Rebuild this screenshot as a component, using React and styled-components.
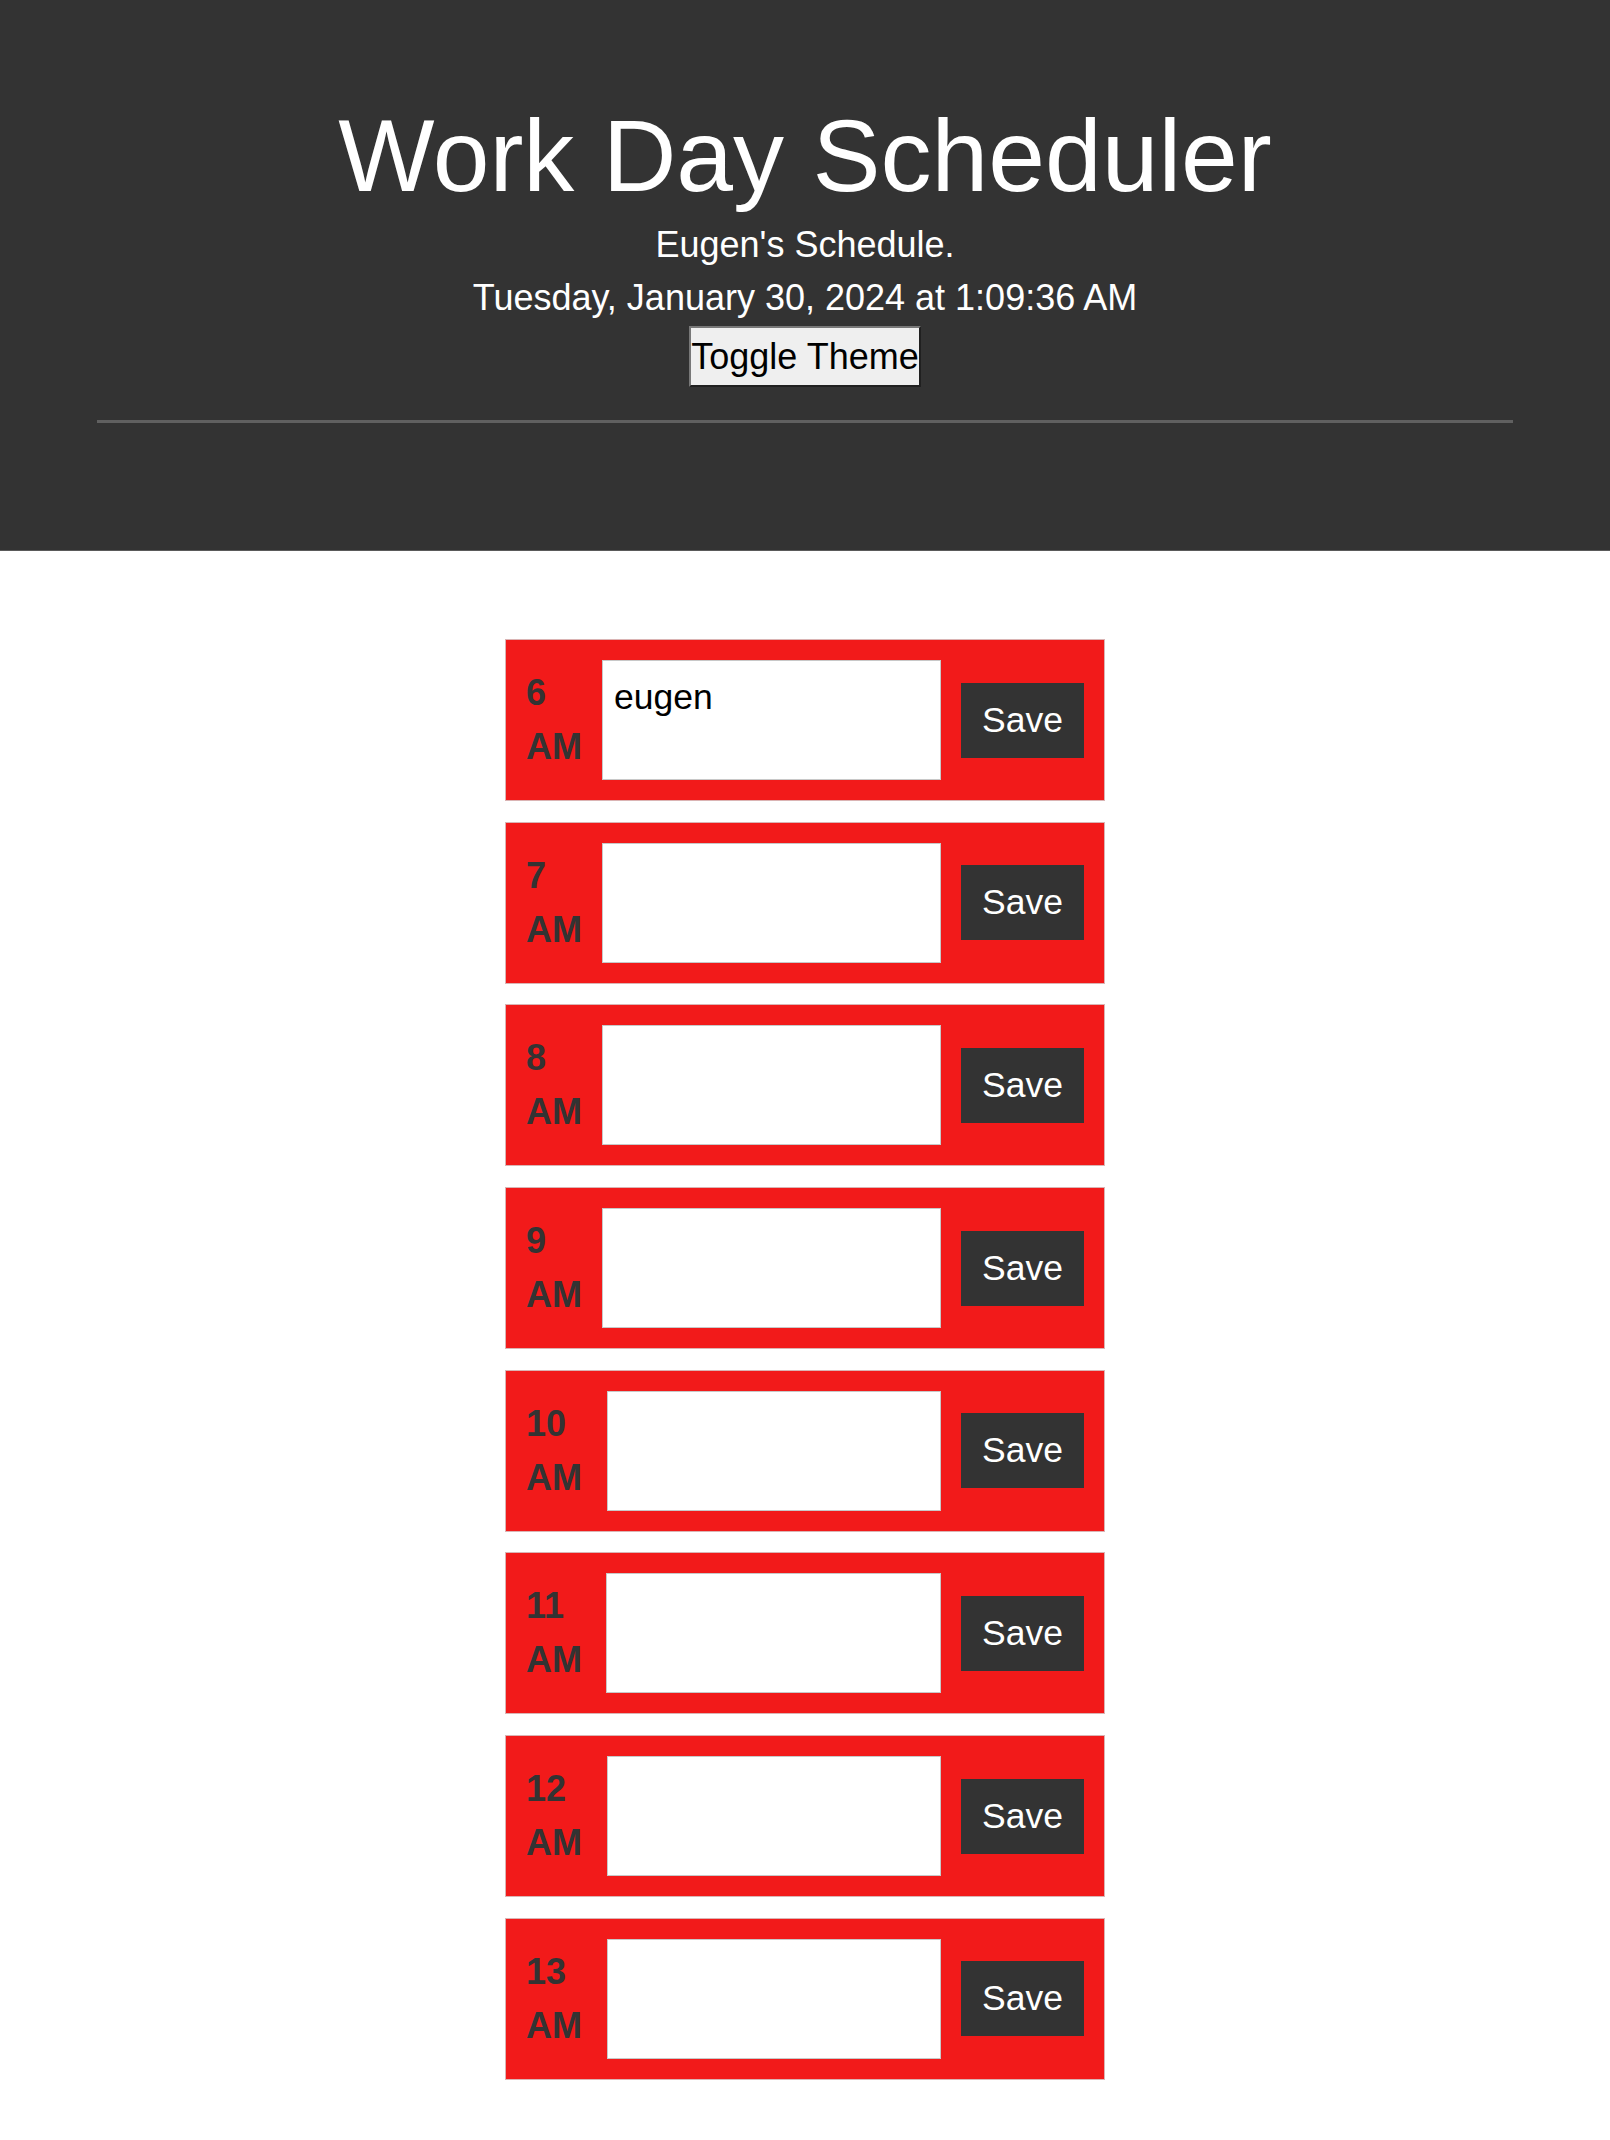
import React, { useState } from "react";
import styled, { createGlobalStyle } from "styled-components";

const GlobalStyle = createGlobalStyle`
  body {
    margin: 0;
    background: #fff;
    font-family: "Liberation Sans", Arial, sans-serif;
  }
`;

const Header = styled.header`
  background-color: ${(p) => (p.$dark ? "#333" : "#555")};
  color: #fff;
  text-align: center;
  padding: 98px 0 127px;
  border-bottom: 1px solid #5a5a5a;
`;

const Title = styled.h1`
  margin: 0;
  font-size: 102px;
  font-weight: 400;
  line-height: 117px;
`;

const Subtitle = styled.p`
  margin: 2.5px 0 0;
  font-size: 36px;
  line-height: 53.5px;
`;

const DateLine = styled.p`
  margin: 0;
  font-size: 36px;
  line-height: 53.5px;
`;

const ThemeButton = styled.button`
  display: inline-block;
  margin-top: 1.5px;
  padding: 2px 0.5px;
  font-family: inherit;
  font-size: 36px;
  line-height: 53px;
  color: #000;
  background: #efefef;
  border: 2px solid;
  border-color: #787878 #202020 #202020 #787878;
  cursor: pointer;
`;

const Divider = styled.hr`
  width: 88%;
  height: 3px;
  margin: 33px auto 0;
  border: none;
  background: #606060;
`;

const Schedule = styled.main`
  display: flex;
  flex-direction: column;
  align-items: center;
  gap: 20.7px;
  padding: 88px 0 60px;
`;

const Row = styled.div`
  box-sizing: border-box;
  width: 600px;
  display: flex;
  align-items: center;
  gap: 20px;
  padding: 20px;
  background: #f21a1a;
  border: 1px solid #dab4b4;
`;

const Hour = styled.div`
  flex: 0 1 auto;
  font-size: 36px;
  font-weight: 700;
  line-height: 54px;
  color: #333;
`;

const Entry = styled.textarea`
  flex: 1 1 561px;
  min-width: 0;
  box-sizing: border-box;
  height: 120px;
  padding: 10px 11px;
  font-family: inherit;
  font-size: 35.5px;
  line-height: 1.5;
  color: #000;
  background: #fff;
  border: 1px solid #c8c8c8;
  resize: none;
  outline: none;
`;

const SaveButton = styled.button`
  flex-shrink: 0;
  width: 123px;
  height: 75px;
  padding: 0;
  font-family: inherit;
  font-size: 35.5px;
  color: #fff;
  background: #333;
  border: none;
  cursor: pointer;
`;

const hours = [6, 7, 8, 9, 10, 11, 12, 13];

export default function App() {
  const [dark, setDark] = useState(true);
  const [entries, setEntries] = useState({ 6: "eugen" });

  const update = (h, value) => setEntries((prev) => ({ ...prev, [h]: value }));

  return (
    <>
      <GlobalStyle />
      <Header $dark={dark}>
        <Title>Work Day Scheduler</Title>
        <Subtitle>Eugen's Schedule.</Subtitle>
        <DateLine>Tuesday, January 30, 2024 at 1:09:36 AM</DateLine>
        <ThemeButton onClick={() => setDark((d) => !d)}>Toggle Theme</ThemeButton>
        <Divider />
      </Header>

      <Schedule>
        {hours.map((h) => (
          <Row key={h}>
            <Hour>{h} AM</Hour>
            <Entry value={entries[h] || ""} onChange={(e) => update(h, e.target.value)} />
            <SaveButton>Save</SaveButton>
          </Row>
        ))}
      </Schedule>
    </>
  );
}
